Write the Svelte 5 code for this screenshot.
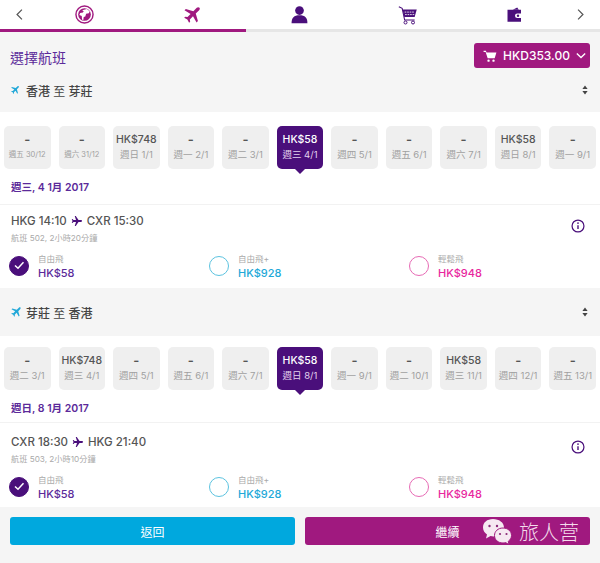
<script>
	const routes = [
		{
			title: ['香港', '芽莊'],
			days: [
				['週五', '30/12', '-'], ['週六', '31/12', '-'], ['週日', '1/1', 'HK$748'], ['週一', '2/1', '-'],
				['週二', '3/1', '-'], ['週三', '4/1', 'HK$58', true], ['週四', '5/1', '-'], ['週五', '6/1', '-'],
				['週六', '7/1', '-'], ['週日', '8/1', 'HK$58'], ['週一', '9/1', '-']
			],
			date: '週三, 4 1月 2017',
			from: 'HKG 14:10',
			to: 'CXR 15:30',
			info: '航班 502, 2小時20分鐘'
		},
		{
			title: ['芽莊', '香港'],
			days: [
				['週二', '3/1', '-'], ['週三', '4/1', 'HK$748'], ['週四', '5/1', '-'], ['週五', '6/1', '-'],
				['週六', '7/1', '-'], ['週日', '8/1', 'HK$58', true], ['週一', '9/1', '-'], ['週二', '10/1', '-'],
				['週三', '11/1', 'HK$58'], ['週四', '12/1', '-'], ['週五', '13/1', '-']
			],
			date: '週日, 8 1月 2017',
			from: 'CXR 18:30',
			to: 'HKG 21:40',
			info: '航班 503, 2小時10分鐘'
		}
	];
	const fares = [
		{ name: '自由飛', price: 'HK$58', kind: 'purple', checked: true },
		{ name: '自由飛+', price: 'HK$928', kind: 'blue' },
		{ name: '輕鬆飛', price: 'HK$948', kind: 'pink' }
	];
	const plane = 'M21 3.2c-.9-.9-2.4-.8-3.3.1L13.6 7.4 4.6 4.8 3 6.4l7.3 4.3-3.7 3.8-2.7-.4L2.6 15.400l3.800 2.100 2.100 3.800 1.300-1.300-.4-2.700 3.800-3.700 4.300 7.300 1.600-1.600-2.600-9 4.100-4.100c.9-.9 1-2.400.4-3.300z';
</script>

<div class="page">
	<header>
		<svg class="chev" viewBox="0 0 10 16"><path d="M8 2 2 8l6 6" /></svg>
		<span class="tab">
			<svg viewBox="0 0 24 24" width="19" height="19">
				<circle cx="12" cy="12" r="10.800" fill="none" stroke="#a0197f" stroke-width="1.800" />
				<circle cx="12" cy="12" r="8" fill="#a0197f" />
				<path fill="#fff" d="M9 6.500l6-1.500 3.500 3-1 2.500-3.500 .5-1 3.500-2 .5-.5 4-1.500-.5-.5-4.500-3-1.500 1-2.500 3.500-.5 1-1.500z" />
			</svg>
		</span>
		<span class="tab">
			<svg viewBox="0 0 24 24" width="20" height="20"><path fill="#a0197f" d={plane} /></svg>
		</span>
		<span class="tab">
			<svg viewBox="0 0 24 24" width="19" height="19">
				<circle cx="12" cy="7" r="5.500" fill="#4a0f7b" />
				<path fill="#4a0f7b" d="M2 23c0-7 3-10 10-10s10 3 10 10z" />
			</svg>
		</span>
		<span class="tab">
			<svg viewBox="0 0 24 24" width="20" height="20">
				<path fill="none" stroke="#4a0f7b" stroke-width="1.300" d="M1 2l4 2 3 14h12" />
				<path fill="#4a0f7b" d="M5.500 5.500h17l-2.500 9H7.500z" />
				<path fill="none" stroke="#fff" stroke-width="1" stroke-dasharray="2 1" d="M8 8.500h12M8.500 11.500h11" />
				<circle cx="9" cy="21" r="1.800" fill="none" stroke="#4a0f7b" stroke-width="1.200" />
				<circle cx="18" cy="21" r="1.800" fill="none" stroke="#4a0f7b" stroke-width="1.200" />
			</svg>
		</span>
		<span class="tab">
			<svg viewBox="0 0 24 24" width="18" height="18">
				<path fill="#4a0f7b" d="M9 5l6-3 2 3z" />
				<path fill="#4a0f7b" d="M2 5h18v5h-5a3 3 0 0 0 0 6h5v5H2z" />
				<circle cx="16" cy="13" r="1.600" fill="#4a0f7b" />
			</svg>
		</span>
		<svg class="chev end" viewBox="0 0 10 16"><path d="M2 2l6 6-6 6" /></svg>
	</header>
	<div class="progress"><div class="progress-fill"></div></div>

	<div class="heading">
		<h1>選擇航班</h1>
		<button class="total">
			<svg viewBox="0 0 24 24" width="14" height="14">
				<path fill="#fff" d="M1 3h4l1 3h17l-3 10H8L4.500 5H1z" />
				<circle cx="9.500" cy="20" r="2" fill="#fff" />
				<circle cx="18" cy="20" r="2" fill="#fff" />
			</svg>
			<span>HKD353.00</span>
			<svg viewBox="0 0 12 8" width="10" height="7"><path d="M1 1.500l5 5 5-5" fill="none" stroke="#fff" stroke-width="1.600" /></svg>
		</button>
	</div>

	{#each routes as route, r}
		<div class="route" class:second={r === 1}>
			<span class="route-plane">
				<svg viewBox="0 0 24 24" width={r === 0 ? 10 : 12} height={r === 0 ? 10 : 12}><path fill="#22a8d8" d={plane} /></svg>
			</span>
			<span class="route-name">{route.title[0]} <em>至</em> {route.title[1]}</span>
			<svg class="sort" viewBox="0 0 8 12" width="6" height="10">
				<path fill="#444" d="M4 0l3.500 4.800h-7zM4 12L.5 7.200h7z" />
			</svg>
		</div>

		<section class="days" class:second={r === 1}>
			<div class="strip">
				{#each route.days as d}
					<div class="day" class:selected={d[3]}>
						<span class="price" class:dash={d[2] === '-'}>{d[2]}</span>
						<span class="when" class:long={d[1].length > 4}>{d[0]} {d[1]}</span>
					</div>
				{/each}
			</div>
			<p class="date">{route.date}</p>
		</section>

		<section class="flight" class:second={r === 1}>
			<div class="flight-top">
				<div>
					<p class="times">
						{route.from}
						<svg viewBox="0 0 24 24" width="12" height="12"><path fill="#4a0f7b" d="M22 12c0-1-1-1.800-2-1.800h-5L9.500 2H7.500l2.500 8.200H5L3 7.800H1.500L3 12l-1.500 4.200H3L5 13.800h5L7.500 22h2l5.500-8.200h5c1 0 2-.8 2-1.800z" /></svg>
						{route.to}
					</p>
					<p class="info">{route.info}</p>
				</div>
				<svg class="info-icon" viewBox="0 0 16 16" width="14" height="14">
					<circle cx="8" cy="8" r="6.800" fill="none" stroke="#4a0f7b" stroke-width="1.400" />
					<path d="M8 7v4.500" stroke="#4a0f7b" stroke-width="1.600" />
					<circle cx="8" cy="4.700" r="1" fill="#4a0f7b" />
				</svg>
			</div>
			<div class="fares">
				{#each fares as f}
					<div class="fare {f.kind}">
						<span class="radio" class:checked={f.checked}>
							{#if f.checked}
								<svg viewBox="0 0 20 20" width="20" height="20"><path d="M6 10.500l3 2.800 5.500-6" fill="none" stroke="#fff" stroke-width="1.500" /></svg>
							{/if}
						</span>
						<div>
							<p class="fare-name">{f.name}</p>
							<p class="fare-price">{f.price}</p>
						</div>
					</div>
				{/each}
			</div>
		</section>
	{/each}

	<footer>
		<button class="back">返回</button>
		<button class="next">繼續</button>
		<div class="mark">
			<svg viewBox="0 0 32 28" width="32" height="28">
				<path fill="#f6e9f2" d="M11 1C5 1 1 4.500 1 9.500c0 3 1.500 5.300 4 7l-1 4 4.500-2.500c1 .3 2 .4 3 .4C18 18.400 22 14.600 22 9.500 22 4.500 17 1 11 1z" />
				<circle cx="7.500" cy="8" r="1.200" fill="#8a2a78" />
				<circle cx="15" cy="8" r="1.200" fill="#8a2a78" />
				<path fill="#f6e9f2" stroke="#a0197f" d="M21 10c-5 0-8.500 3.300-8.500 7.500S16 25 21 25c1 0 1.800-.1 2.600-.4l3.400 2-.8-3.200c2-1.400 3.300-3.500 3.300-5.900C29.500 13.300 26 10 21 10z" />
				<circle cx="18" cy="16" r="1.100" fill="#8a2a78" />
				<circle cx="24.500" cy="16" r="1.100" fill="#8a2a78" />
			</svg>
			<span>旅人营</span>
		</div>
	</footer>
</div>

<style>
	:global(body) {
		background: #f5f5f5;
	}

	p, h1 {
		margin: 0;
	}

	.page {
		position: relative;
		width: 600px;
		height: 563px;
		overflow: hidden;
		font-family: "Inter", "Noto Sans CJK TC", sans-serif;
		background: #f5f5f5;
		color: #555;
	}

	header {
		height: 29px;
		background: #fff;
		display: grid;
		grid-template-columns: 31px repeat(5, 1fr) 31px;
		align-items: center;
		justify-items: center;
	}

	.tab {
		display: flex;
	}

	.chev {
		width: 9px;
		height: 13px;
		margin-left: 7px;
		fill: none;
		stroke: #555;
		stroke-width: 1.500;
	}

	.chev.end {
		margin-left: 0;
		margin-right: 7px;
	}

	.progress {
		height: 3px;
		background: #e6e6e6;
	}

	.progress-fill {
		width: 246px;
		height: 100%;
		background: #a0197f;
	}

	.heading {
		display: flex;
		justify-content: space-between;
		align-items: center;
		padding: 11px 10px 0;
	}

	h1 {
		font-size: 14px;
		font-weight: 400;
		color: #5b2a9a;
		padding-top: 2px;
	}

	.total {
		width: 116px;
		height: 25px;
		border: 0;
		border-radius: 3px;
		background: #a0197f;
		color: #fff;
		font: 500 12px "Inter", sans-serif;
		display: flex;
		align-items: center;
		justify-content: space-between;
		padding: 0 4px 0 9px;
	}

	.route {
		height: 44px;
		display: flex;
		align-items: center;
		padding: 0 10px;
	}

	.route.second {
		height: 48px;
	}

	.route-plane {
		width: 16px;
		display: flex;
	}

	.route-name {
		font-size: 12px;
		font-weight: 500;
		color: #444;
	}

	.route-name em {
		font-style: normal;
		font-weight: 400;
	}

	.sort {
		margin-left: auto;
		margin-right: 2px;
	}

	.days {
		background: #fff;
		padding: 14px 4px 0;
		height: 93px;
		box-sizing: border-box;
		border-bottom: 1px solid #f2f2f2;
	}

	.days.second {
		padding-top: 11px;
		height: 87px;
	}

	.strip {
		display: grid;
		grid-template-columns: repeat(11, 1fr);
		gap: 8px;
	}

	.day {
		position: relative;
		height: 43px;
		border-radius: 5px;
		background: #efefef;
		display: flex;
		flex-direction: column;
		align-items: center;
		justify-content: center;
		gap: 3px;
		color: #555;
	}

	.day.selected {
		background: #4a0f7b;
		color: #fff;
	}

	.day.selected::after {
		content: "";
		position: absolute;
		left: 50%;
		bottom: -5px;
		margin-left: -5px;
		border: 5px solid transparent;
		border-bottom: 0;
		border-top-color: #4a0f7b;
	}

	.price {
		font-size: 10.500px;
		font-weight: 500;
		line-height: 13px;
		white-space: nowrap;
		margin-top: -1px;
	}

	.price.dash {
		font-size: 13px;
		font-weight: 600;
	}

	.when {
		font-size: 9.500px;
		line-height: 12px;
		color: #a0a0a0;
		white-space: nowrap;
	}

	.when.long {
		font-size: 7.500px;
	}

	.selected .when {
		color: #e3d3ee;
	}

	.date {
		margin: 10px 7px 0;
		font-size: 10.500px;
		font-weight: 600;
		color: #5b2a9a;
	}

	.flight {
		background: #fff;
		height: 83px;
		padding: 9px 0 0 9px;
		box-sizing: border-box;
	}

	.flight.second {
		height: 84px;
		padding-top: 12px;
	}

	.flight-top {
		height: 36px;
		display: flex;
		justify-content: space-between;
		padding: 0 15px 0 2px;
	}

	.times {
		font-size: 11.500px;
		font-weight: 500;
		color: #555;
		display: flex;
		align-items: center;
		gap: 4px;
		line-height: 14px;
	}

	.info {
		margin-top: 3px;
		font-size: 8.200px;
		color: #aaa;
	}

	.info-icon {
		margin-top: 5px;
	}

	.fares {
		display: grid;
		grid-template-columns: repeat(3, 200px);
	}

	.fare {
		display: flex;
		gap: 9px;
		align-items: center;
	}

	.radio {
		width: 20px;
		height: 20px;
		box-sizing: border-box;
		border-radius: 50%;
		border: 1.500px solid;
		display: block;
		position: relative;
	}

	.radio svg {
		position: absolute;
		left: -1.500px;
		top: -1.500px;
	}

	.radio.checked {
		background: #4a0f7b;
	}

	.fare.purple { color: #5b2a9a; }
	.fare.blue { color: #22a8d8; }
	.fare.pink { color: #e8279e; }
	.fare.purple .radio { border-color: #4a0f7b; }
	.fare.blue .radio { border-color: #5cc3e0; }
	.fare.pink .radio { border-color: #e76bb5; }

	.fare-name {
		font-size: 8.500px;
		color: #aaa;
		line-height: 12px;
		margin-top: 3px;
	}

	.fare-price {
		font-size: 11px;
		font-weight: 500;
		line-height: 15px;
		margin-top: 1px;
	}

	footer {
		margin-top: 10px;
		padding: 0 10px;
		display: flex;
		justify-content: space-between;
	}

	footer button {
		height: 28px;
		border: 0;
		border-radius: 3px;
		color: #fff;
		font: 400 12px "Noto Sans CJK TC", sans-serif;
	}

	.back {
		width: 285px;
		background: #00a8de;
	}

	.next {
		width: 285px;
		background: #a0197f;
	}

	.mark {
		position: absolute;
		left: 482px;
		top: 517px;
		display: flex;
		align-items: center;
		gap: 5px;
		color: #f3dcec;
		font: 300 20px "Noto Sans CJK SC", sans-serif;
	}
</style>
